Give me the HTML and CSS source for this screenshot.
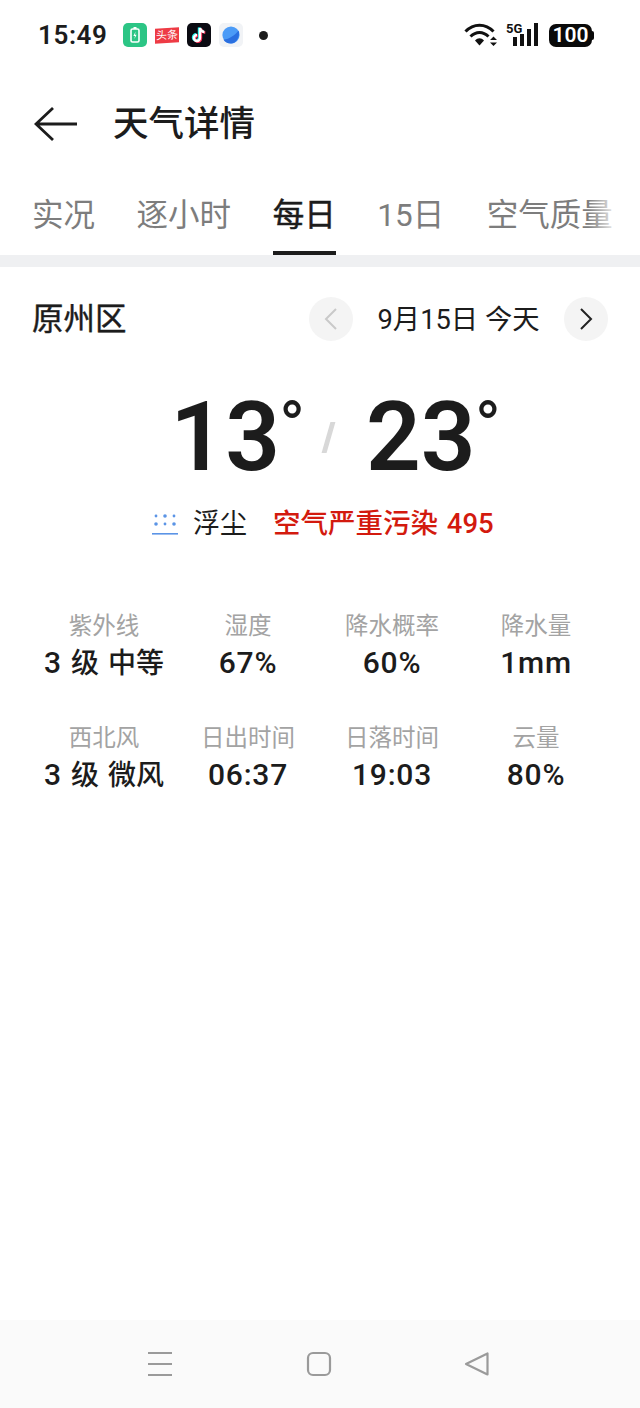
FILE: index.html
```html
<!DOCTYPE html>
<html lang="zh-CN">
<head>
<meta charset="utf-8">
<title>天气详情</title>
<link rel="stylesheet" href="styles.css">
</head>
<body>
<div class="screen">
  <div class="status">
    <span class="time">15:49</span>
    <div class="apps">
      <svg class="app" width="24" height="24" viewBox="0 0 24 24"><rect width="24" height="24" rx="5" fill="#2cc585"/><rect x="8" y="6" width="8" height="13" rx="1.5" fill="none" stroke="#fff" stroke-width="1.6"/><rect x="10.5" y="4" width="3" height="2" fill="#fff"/><path d="M12.6 8.5 10.4 13h1.6l-.6 3 2.2-4.2H12z" fill="#fff"/></svg>
      <span class="toutiao">头条</span>
      <svg class="app" width="24" height="24" viewBox="0 0 24 24"><rect width="24" height="24" rx="5" fill="#0b0b12"/><path d="M13 5v10a3 3 0 1 1-3-3M13 5c.4 2.4 2 3.8 4.4 4" fill="none" stroke="#25f4ee" stroke-width="2.6" transform="translate(-.9 -.6)"/><path d="M13 5v10a3 3 0 1 1-3-3M13 5c.4 2.4 2 3.8 4.4 4" fill="none" stroke="#fe2c55" stroke-width="2.6" transform="translate(.9 .6)"/><path d="M13 5v10a3 3 0 1 1-3-3M13 5c.4 2.4 2 3.8 4.4 4" fill="none" stroke="#fff" stroke-width="2.4"/></svg>
      <svg class="app" width="24" height="24" viewBox="0 0 24 24"><rect width="24" height="24" rx="5" fill="#f1f3f6"/><circle cx="12" cy="12" r="8.6" fill="#4b9bf7"/><path d="M4.4 16.5C9 17 16.5 12 19.6 7.5 21.5 13 17.5 20.6 12 20.6c-3.500 0-6.200-1.600-7.600-4.100z" fill="#2a6fe0"/></svg>
      <span class="dot"></span>
    </div>
    <div class="sys">
      <svg width="35" height="26" viewBox="0 0 35 26"><path d="M1.500 9.500C9.500 1 21.500 1 29.500 9.500" fill="none" stroke="#111" stroke-width="3"/><path d="M6.500 14.500C12 9 19 9 24.500 14.500" fill="none" stroke="#111" stroke-width="3"/><path d="M11 18.500C14 15.500 17 15.500 20 18.500L15.500 23.500z" fill="#111"/><path d="M26 18l3.500-3.500L33 18zM26 20.500l3.500 3.500 3.500-3.500z" fill="#111"/></svg>
      <svg class="signal" width="36" height="26" viewBox="0 0 36 26"><text x="1" y="11" class="five-g">5G</text><rect x="8" y="15" width="4" height="9" fill="#111"/><rect x="15" y="12" width="4" height="12" fill="#111"/><rect x="22" y="7" width="4" height="17" fill="#111"/><rect x="29" y="1" width="4" height="23" fill="#111"/></svg>
      <span class="battery">100</span><span class="battery-tip"></span>
    </div>
  </div>

  <div class="header">
    <svg class="back" width="44" height="36" viewBox="0 0 44 36"><path d="M19 2 2 18l17 16M2 18h41" fill="none" stroke="#1c1c1c" stroke-width="2.800"/></svg>
    <h1 class="title">天气详情</h1>
  </div>

  <nav class="tabs">
    <span class="tab">实况</span>
    <span class="tab">逐小时</span>
    <span class="tab active">每日</span>
    <span class="tab">15日</span>
    <span class="tab last">空气质量</span>
    <span class="fade"></span>
  </nav>
  <div class="divider"></div>

  <div class="loc-row">
    <span class="loc">原州区</span>
    <div class="date-nav">
      <span class="round"><svg width="14" height="24" viewBox="0 0 14 24"><path d="M12 2 2 12l10 10" fill="none" stroke="#c9c9c9" stroke-width="2"/></svg></span>
      <span class="date">9月15日 今天</span>
      <span class="round"><svg width="14" height="24" viewBox="0 0 14 24"><path d="M2 2l10 10L2 22" fill="none" stroke="#222" stroke-width="2"/></svg></span>
    </div>
  </div>

  <div class="temps">
    <span class="temp">13<span class="deg">°</span></span>
    <span class="slash"></span>
    <span class="temp">23<span class="deg">°</span></span>
  </div>

  <div class="cond">
    <svg width="26" height="24" viewBox="0 0 26 24"><g fill="#5b94e6"><circle cx="4" cy="4" r="1.400"/><circle cx="13" cy="4" r="1.800"/><circle cx="22" cy="4" r="1.400"/><circle cx="4" cy="12" r="1.800"/><circle cx="13" cy="12" r="1.400"/><circle cx="22" cy="12" r="1.800"/><rect x="0" y="21" width="26" height="1.600"/></g></svg>
    <span class="cond-text">浮尘</span>
    <span class="aqi">空气严重污染 495</span>
  </div>

  <div class="grid">
    <div class="cell"><span class="label">紫外线</span><span class="value">3 <span class="han">级 中等</span></span></div>
    <div class="cell"><span class="label">湿度</span><span class="value">67%</span></div>
    <div class="cell"><span class="label">降水概率</span><span class="value">60%</span></div>
    <div class="cell"><span class="label">降水量</span><span class="value">1mm</span></div>
    <div class="cell"><span class="label">西北风</span><span class="value">3 <span class="han">级 微风</span></span></div>
    <div class="cell"><span class="label">日出时间</span><span class="value">06:37</span></div>
    <div class="cell"><span class="label">日落时间</span><span class="value">19:03</span></div>
    <div class="cell"><span class="label">云量</span><span class="value">80%</span></div>
  </div>

  <div class="navbar">
    <svg width="26" height="26" viewBox="0 0 26 26"><path d="M1 2h24M1 13h24M1 24h24" stroke="#9a9a9a" stroke-width="2" fill="none"/></svg>
    <svg width="26" height="26" viewBox="0 0 26 26"><rect x="2" y="2" width="22" height="22" rx="5" fill="none" stroke="#9a9a9a" stroke-width="2.200"/></svg>
    <svg width="26" height="26" viewBox="0 0 26 26"><path d="M23.500 2.500v21L2 13z" fill="none" stroke="#9a9a9a" stroke-width="2.200" stroke-linejoin="round"/></svg>
  </div>
</div>
</body>
</html>
```

FILE: styles.css
```css
* { box-sizing: border-box; margin: 0; padding: 0; }
html, body { width: 640px; height: 1408px; background: #fff; overflow: hidden; }
body { font-family: Roboto, "Noto Sans CJK SC", sans-serif; color: #1c1c1c; }
.screen { width: 640px; height: 1408px; display: flex; flex-direction: column; }

.status { height: 70px; display: flex; align-items: center; padding: 0 46px 0 38px; }
.time { font-size: 26px; font-weight: 600; letter-spacing: .6px; width: 85px; }
.apps { display: flex; align-items: center; gap: 8px; flex: 1; }
.app { display: block; }
.toutiao { width: 24px; height: 15px; background: #ee3b45; color: #fff; font-size: 11px; line-height: 15px; text-align: center; white-space: nowrap; overflow: hidden; transform: skewY(-3deg); }
.dot { width: 9px; height: 9px; border-radius: 50%; background: #1c1c1c; margin-left: 8px; }
.sys { display: flex; align-items: center; }
.signal { margin-left: 6px; overflow: visible; }
.five-g { font: 700 13px Roboto, sans-serif; fill: #111; }
.battery { margin-left: 8px; width: 43px; height: 23px; border-radius: 7px; background: #0a0a0a; color: #fff; font-size: 21px; font-weight: 600; line-height: 23px; text-align: center; }
.battery-tip { width: 2px; height: 9px; background: #0a0a0a; border-radius: 0 2px 2px 0; }

.header { height: 108px; display: flex; align-items: center; padding-left: 34px; }
.back { display: block; }
.title { margin-left: 35px; font-size: 35.500px; font-weight: 500; line-height: 48px; }

.tabs { position: relative; height: 77px; display: flex; gap: 41.600px; overflow: hidden; padding-left: 32px; }
.tab { flex: none; font-size: 31.500px; line-height: 44px; padding-top: 16px; color: #7d7d7d; white-space: nowrap; height: 77px; }
.last { margin-left: 1px; }
.active { color: #1c1c1c; position: relative; -webkit-text-stroke: .5px #1c1c1c; }
.active::after { content: ""; position: absolute; left: 0; right: 0; bottom: 0; height: 4px; background: #1c1c1c; }
.fade { position: absolute; right: 0; top: 0; width: 52px; height: 60px; background: linear-gradient(to right, rgba(255,255,255,0), #fff 60%); }
.divider { height: 12px; background: #eff0f2; }

.loc-row { display: flex; align-items: center; justify-content: space-between; padding: 30px 32px 0 32px; height: 74px; }
.loc { font-size: 31.500px; font-weight: 400; line-height: 44px; padding-top: 1px; -webkit-text-stroke: .4px #1c1c1c; }
.date-nav { display: flex; align-items: center; }
.round { width: 44px; height: 44px; border-radius: 50%; background: #f4f4f4; display: flex; align-items: center; justify-content: center; }
.date { width: 211px; text-align: center; font-size: 27.300px; line-height: 44px; padding-top: 1px; }

.temps { margin-top: 40px; display: flex; justify-content: center; align-items: flex-start; height: 100px; padding-left: 32px; }
.temp { font-size: 96px; font-weight: 600; line-height: 112px; position: relative; margin-right: 26px; }
.deg { position: absolute; left: 100%; top: 8px; margin-left: -1px; font-size: 70px; font-weight: 400; line-height: 76px; }
.slash { width: 5px; height: 31px; margin: 41px 35px 0 20px; background: #d8d8d8; transform: skewX(-16deg); }

.cond { margin-top: 23px; display: flex; align-items: center; padding-left: 152px; height: 40px; }
.cond-text { margin-left: 15px; font-size: 27px; line-height: 40px; }
.aqi { margin-left: 26px; font-size: 27.500px; font-weight: 500; line-height: 40px; color: #d31a0e; word-spacing: 2px; }

.grid { margin-top: 64px; padding: 0 32px; display: grid; grid-template-columns: repeat(4, 144px); row-gap: 38px; }
.cell { display: flex; flex-direction: column; align-items: center; height: 74px; }
.label { font-size: 23.500px; line-height: 36px; color: #a3a3a3; white-space: nowrap; }
.value { font-size: 30px; font-weight: 500; line-height: 38px; letter-spacing: .8px; word-spacing: 1px; white-space: nowrap; }
.han { font-size: 28px; letter-spacing: 0; word-spacing: 2px; }

.navbar { margin-top: auto; height: 88px; background: #fafafa; display: flex; align-items: center; padding: 0 150px 0 147px; justify-content: space-between; }
```
